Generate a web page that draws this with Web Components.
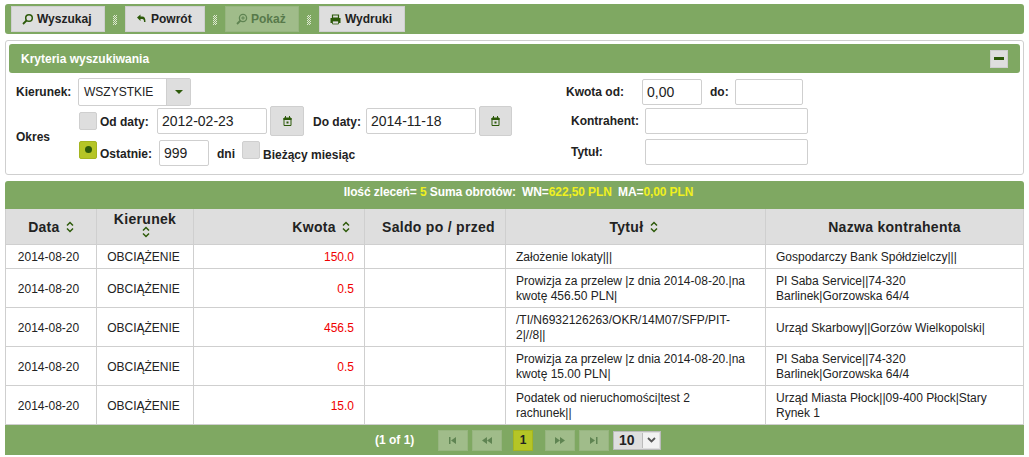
<!DOCTYPE html>
<html lang="pl">
<head>
<meta charset="utf-8">
<title>Kryteria wyszukiwania</title>
<style>
html, body { margin: 0; padding: 0; background: #fff; overflow: hidden; }
body { padding: 4px 5px 0 5px; font: 12px "Liberation Sans", Arial, sans-serif; color: #222; }
</style>
</head>
<body>
<app-toolbar>
  <tool-button icon="search" style="width:94px">Wyszukaj</tool-button>
  <tool-sep></tool-sep>
  <tool-button icon="back" style="width:80px">Powrót</tool-button>
  <tool-sep></tool-sep>
  <tool-button icon="zoom" disabled style="width:74px">Pokaż</tool-button>
  <tool-sep></tool-sep>
  <tool-button icon="print" style="width:86px">Wydruki</tool-button>
</app-toolbar>
<search-panel title="Kryteria wyszukiwania">
  <search-form></search-form>
</search-panel>
<data-grid></data-grid>

<script>
var ICONS = {
  search: '<circle cx="8" cy="5" r="3.3" fill="none" stroke="currentColor" stroke-width="1.5"/><path d="M5.500 7.500L2 11" stroke="currentColor" stroke-width="1.800"/>',
  zoom: '<circle cx="8" cy="5" r="3.600" fill="none" stroke="currentColor" stroke-width="1.300"/><path d="M5.500 7.500L2 11" stroke="currentColor" stroke-width="1.800"/><path d="M6.200 5h3.600M8 3.200v3.600" stroke="currentColor"/>',
  back: '<path d="M2 4.500L5.500 1.500v2h1.700c2.300 0 3.300 1.700 3.300 5.500H9c0-2.200-.4-3-1.800-3H5.500v2z" fill="currentColor"/>',
  print: '<path d="M3.500 2h6v3h-6z" fill="none" stroke="currentColor" stroke-width="1.200"/><path d="M1.500 5h10v5h-10z" fill="currentColor"/><path d="M3.500 8h6v3h-6z" fill="#dedede" stroke="currentColor" stroke-width=".8"/>'
};

// toolbar on top
class AppToolbar extends HTMLElement {
  constructor(){
    super();
    this.attachShadow({mode:"open"});
    this.shadowRoot.innerHTML = `<style>
      :host { display:flex; align-items:center; height:30px; box-sizing:border-box; padding:0 6px; background:#7fa862; border-radius:3px; }
    </style><slot></slot>`;
  }
}
customElements.define("app-toolbar", AppToolbar);

class ToolSep extends HTMLElement {
  constructor(){
    super();
    this.attachShadow({mode:"open"});
    this.shadowRoot.innerHTML = `<style>
      :host { display:block; width:4px; height:10px; margin:2px 8px 0 8px;
        background:repeating-conic-gradient(#dfe8d2 0 25%, transparent 0 50%) 0 0/2px 2px; }
    </style>`;
  }
}
customElements.define("tool-sep", ToolSep);

class ToolButton extends HTMLElement {
  constructor(){
    super();
    this.attachShadow({mode:"open"});
  }
  connectedCallback(){
    var icon = this.getAttribute("icon");
    this.shadowRoot.innerHTML = `<style>
      :host { display:flex; align-items:center; box-sizing:border-box; height:26px; padding:0 0 0 9px; gap:3px;
        background:#dedede; border:1px solid #cfcfcf; font:bold 12px "Liberation Sans",Arial,sans-serif; color:#222; }
      :host([disabled]) { background:#a0bc8a; border-color:#97b580; color:#57794a; }
      :host([disabled]) svg { color:#5f8452; }
      svg { width:13px; height:13px; color:#2d5a0a; flex:none; }
    </style><svg viewBox="0 0 13 13">${ICONS[icon]}</svg><slot></slot>`;
  }
}
customElements.define("tool-button", ToolButton);

// panel with the green header
class SearchPanel extends HTMLElement {
  constructor(){
    super();
    this.attachShadow({mode:"open"});
  }
  connectedCallback(){
    this.shadowRoot.innerHTML = `<style>
      :host { display:block; box-sizing:border-box; height:135px; margin-top:6px; padding:3px; border:1px solid #cfcfcf; border-radius:3px; background:#fff; }
      .head { display:flex; align-items:center; justify-content:space-between; height:29px; box-sizing:border-box; padding:0 12px;
        background:#7fa862; border-radius:3px; color:#fff; font:bold 12px "Liberation Sans",Arial,sans-serif; }
      .min { display:flex; align-items:center; justify-content:center; width:18px; height:18px; box-sizing:border-box;
        background:#dedede; border:1px solid #cfcfcf; }
      .min i { display:block; width:10px; height:3px; background:#2d5a0a; }
    </style>
    <div class="head"><span>${this.getAttribute("title")}</span><span class="min"><i></i></span></div>
    <slot></slot>`;
  }
}
customElements.define("search-panel", SearchPanel);

class TextField extends HTMLElement {
  constructor(){
    super();
    this.attachShadow({mode:"open"});
  }
  connectedCallback(){
    this.shadowRoot.innerHTML = `<style>
      :host { display:block; box-sizing:border-box; width:var(--w,100px); height:26px; padding:0 4px; background:#fff; flex:none;
        border:1px solid #cfcfcf; border-radius:2px; font:14px/24px "Liberation Sans",Arial,sans-serif; color:#222; }
    </style><slot></slot>`;
  }
}
customElements.define("text-field", TextField);

class CheckBox extends HTMLElement {
  constructor(){
    super();
    this.attachShadow({mode:"open"});
  }
  connectedCallback(){
    this.shadowRoot.innerHTML = `<style>
      :host { display:flex; align-items:center; justify-content:center; box-sizing:border-box; width:18px; height:18px; flex:none;
        background:#dedede; border:1px solid #cfcfcf; border-radius:2px; }
      :host([checked]) { background:#b5c526; border-color:#a5b520; }
      i { display:none; width:7px; height:7px; border-radius:50%; background:#2d5a0a; margin-top:-1px; }
      :host([checked]) i { display:block; }
    </style><i></i>`;
  }
}
customElements.define("check-box", CheckBox);

class CalButton extends HTMLElement {
  constructor(){
    super();
    this.attachShadow({mode:"open"});
    this.shadowRoot.innerHTML = `<style>
      :host { display:flex; align-items:center; justify-content:center; box-sizing:border-box; width:var(--w,34px); height:30px; flex:none;
        background:#dedede; border:1px solid #cfcfcf; border-radius:2px; }
      svg { width:9px; height:10px; }
    </style><svg viewBox="0 0 9 10"><path d="M1 2h7v7.500H1z" fill="none" stroke="#2d5a0a"/><path d="M.5 2h8v2h-8zM2 0h1v2H2zM6 0h1v2H6zM3.500 5.500h2v2h-2z" fill="#2d5a0a"/></svg>`;
  }
}
customElements.define("cal-button", CalButton);

class DropDown extends HTMLElement {
  constructor(){
    super();
    this.attachShadow({mode:"open"});
    this.shadowRoot.innerHTML = `<style>
      :host { display:flex; box-sizing:border-box; width:113px; height:28px; background:#fff; border:1px solid #cfcfcf; border-radius:2px;
        font:12px "Liberation Sans",Arial,sans-serif; color:#222; }
      .val { flex:1; padding:0 5px; line-height:27px; }
      .arr { width:23px; display:flex; align-items:center; justify-content:center; background:#dedede; border-left:1px solid #cfcfcf; }
      .arr i { width:0; height:0; border:4px solid transparent; border-top:4px solid #2d5a0a; border-bottom:0; }
    </style><span class="val"><slot></slot></span><span class="arr"><i></i></span>`;
  }
}
customElements.define("drop-down", DropDown);

// the search criteria
class SearchForm extends HTMLElement {
  constructor(){
    super();
    this.attachShadow({mode:"open"});
    this.shadowRoot.innerHTML = `<style>
      :host { display:flex; padding:5px 0 0 7px; font:bold 12px "Liberation Sans",Arial,sans-serif; color:#222; }
      .left { width:550px; display:grid; grid-template-columns:62px 1fr; grid-template-rows:28px 61px; align-items:center; }
      .line { display:flex; align-items:center; }
      .stack { display:flex; flex-direction:column; gap:2px; align-self:start; }
      .stack .line { height:30px; }
      .right { display:flex; flex-direction:column; padding-top:1px; }
      .right .line { height:26px; margin-bottom:3px; }
      .right .line + .line + .line { margin-top:2px; }
      .up { margin-bottom:6px; }
    </style>
    <div class="left">
      <span>Kierunek:</span>
      <div class="line"><drop-down>WSZYSTKIE</drop-down></div>
      <span>Okres</span>
      <div class="stack">
        <div class="line">
          <check-box style="margin:0 3px 0 1px"></check-box>
          <span style="width:57px;padding-top:2px">Od daty:</span>
          <text-field style="--w:110px">2012-02-23</text-field>
          <cal-button style="margin-left:3px"></cal-button>
          <span style="width:53px;margin-left:9px;padding-top:2px">Do daty:</span>
          <text-field style="--w:110px">2014-11-18</text-field>
          <cal-button style="margin-left:3px;--w:33px"></cal-button>
        </div>
        <div class="line">
          <check-box checked class="up" style="margin-left:1px;margin-right:3px"></check-box>
          <span style="width:59px;padding-top:2px">Ostatnie:</span>
          <text-field style="--w:50px">999</text-field>
          <span style="margin:2px 8px 0 8px;width:17px">dni</span>
          <check-box class="up" style="margin-right:3px"></check-box>
          <span style="padding-top:3px">Bieżący miesiąc</span>
        </div>
      </div>
    </div>
    <div class="right">
      <div class="line">
        <span style="width:76px">Kwota od:</span>
        <text-field style="--w:60px">0,00</text-field>
        <span style="margin:0 8px;width:17px">do:</span>
        <text-field style="--w:68px"></text-field>
      </div>
      <div class="line">
        <span style="width:74px;margin-left:5px">Kontrahent:</span>
        <text-field style="--w:163px"></text-field>
      </div>
      <div class="line">
        <span style="width:74px;margin-left:5px">Tytuł:</span>
        <text-field style="--w:163px"></text-field>
      </div>
    </div>`;
  }
}
customElements.define("search-form", SearchForm);

class SortMark extends HTMLElement {
  constructor(){
    super();
    this.attachShadow({mode:"open"});
    this.shadowRoot.innerHTML = `<style>
      :host { display:inline-block; width:8px; height:12px; vertical-align:-1px; margin-left:2px; }
      svg { display:block; }
    </style><svg width="8" height="12" viewBox="0 0 8 12"><path d="M1 4.500L4 1.500L7 4.500M1 7.500L4 10.500L7 7.500" fill="none" stroke="#2d5a0a" stroke-width="1.500"/></svg>`;
  }
}
customElements.define("sort-mark", SortMark);

class PagerButton extends HTMLElement {
  constructor(){
    super();
    this.attachShadow({mode:"open"});
  }
  connectedCallback(){
    var paths = {
      first: "M2 1h1.500v7H2zM9 1v7L4 4.500z",
      prev: "M6 1v7L1 4.500zM11 1v7L6 4.500z",
      next: "M1 1v7l5-3.500zM6 1v7l5-3.500z",
      last: "M2 1v7l5-3.500zM8 1h1.500v7H8z"
    };
    this.shadowRoot.innerHTML = `<style>
      :host { display:flex; align-items:center; justify-content:center; box-sizing:border-box; width:30px; height:21px;
        background:#a0bc8a; border:1px solid #97b580; }
      svg { width:12px; height:9px; }
    </style><svg viewBox="0 0 12 9"><path d="${paths[this.getAttribute("kind")]}" fill="#5f8452"/></svg>`;
  }
}
customElements.define("pager-button", PagerButton);

class PagerBar extends HTMLElement {
  constructor(){
    super();
    this.attachShadow({mode:"open"});
    this.shadowRoot.innerHTML = `<style>
      :host { display:flex; align-items:center; height:30px; box-sizing:border-box; padding:0 0 0 370px; background:#7fa862;
        font:bold 12px "Liberation Sans",Arial,sans-serif; color:#fff; }
      .cur { display:flex; align-items:center; justify-content:center; box-sizing:border-box; width:20px; height:21px; margin:0 12px 0 11px;
        background:#b5c526; border:1px solid #a5b520; color:#222; }
      .pp { display:flex; box-sizing:border-box; width:48px; height:19px; margin-left:4px; background:#dedede; border:1px solid #bbb; color:#222; font-size:14px; line-height:17px; }
      .pp span { flex:1; padding-left:5px; }
      .pp i { width:16px; margin:1px; display:flex; align-items:center; justify-content:center; background:#f2f2f2; border-left:1px solid #bbb; }
      .info { width:63px; }
      pager-button + pager-button { margin-left:4px; }
    </style>
    <span class="info">(1 of 1)</span>
    <pager-button kind="first"></pager-button>
    <pager-button kind="prev"></pager-button>
    <span class="cur">1</span>
    <pager-button kind="next"></pager-button>
    <pager-button kind="last"></pager-button>
    <span class="pp"><span>10</span><i><svg width="9" height="6" viewBox="0 0 9 6"><path d="M1 1l3.500 3.500L8 1" fill="none" stroke="#555" stroke-width="1.800"/></svg></i></span>`;
  }
}
customElements.define("pager-bar", PagerBar);

var PRZELEW = "Prowizja za przelew |z dnia 2014-08-20.|na kwotę ";
var SABA = "PI Saba Service||74-320 Barlinek|Gorzowska 64/4";
var ROWS = [
  ["150.0", "Założenie lokaty|||", "Gospodarczy Bank Spółdzielczy|||", 24],
  ["0.5", PRZELEW + "456.50 PLN|", SABA, 39],
  ["456.5", "/TI/N6932126263/OKR/14M07/SFP/PIT-2|//8||", "Urząd Skarbowy||Gorzów Wielkopolski|", 39],
  ["0.5", PRZELEW + "15.00 PLN|", SABA, 39],
  ["15.0", "Podatek od nieruchomości|test 2 rachunek||", "Urząd Miasta Płock||09-400 Płock|Stary Rynek 1", 39]
];

// results table with summary and pager
class DataGrid extends HTMLElement {
  constructor(){
    super();
    this.attachShadow({mode:"open"});
    var rows = ROWS.map(function(r){
      return `<tr style="height:${r[3]}px"><td class="c d">2014-08-20</td><td class="c k">OBCIĄŻENIE</td><td class="amt">${r[0]}</td><td></td><td class="t">${r[1]}</td><td>${r[2]}</td></tr>`;
    }).join("");
    this.shadowRoot.innerHTML = `<style>
      :host { display:block; margin-top:6px; font:12px "Liberation Sans",Arial,sans-serif; color:#222; }
      .sum { height:28px; box-sizing:border-box; padding:4px 0 0 8px; text-align:center; background:#7fa862; border-radius:3px 3px 0 0;
        color:#fff; font-weight:bold; line-height:14px; letter-spacing:-.1px; }
      .sum b { color:#f0f020; }
      .sum span { margin-left:3px; }
      table { width:100%; border-collapse:collapse; table-layout:fixed; }
      th { height:33px; padding:0; background:#dedede; border:1px solid #cfcfcf; border-top:0; font:bold 14px "Liberation Sans",Arial,sans-serif; letter-spacing:.3px; color:#222; }
      th.k { line-height:13px; padding-bottom:2px; }
      th.r { text-align:right; padding-right:14px; }
      th.s { padding-left:7px; }
      th.t { padding-right:4px; }
      td { padding:2px 10px 0 10px; border:1px solid #cfcfcf; line-height:15px; }
      td.c { text-align:center; padding:2px 0 0 0; }
      td.d { padding-right:5px; }
      td.k { padding-right:3px; }
      td.t { padding-right:19px; }
      td.amt { text-align:right; color:#f00000; }
    </style>
    <div class="sum">Ilość zleceń= <b>5</b> Suma obrotów: <span>WN=<b>622,50 PLN</b></span> <span>MA=<b>0,00 PLN</b></span></div>
    <table>
      <colgroup><col style="width:91px"><col style="width:97px"><col style="width:171px"><col style="width:141px"><col style="width:260px"><col></colgroup>
      <thead><tr>
        <th>Data <sort-mark></sort-mark></th>
        <th class="k">Kierunek<br><sort-mark></sort-mark></th>
        <th class="r">Kwota <sort-mark></sort-mark></th>
        <th class="s">Saldo po / przed</th>
        <th class="t">Tytuł <sort-mark></sort-mark></th>
        <th>Nazwa kontrahenta</th>
      </tr></thead>
      <tbody>${rows}</tbody>
    </table>
    <pager-bar></pager-bar>`;
  }
}
customElements.define("data-grid", DataGrid);
</script>
</body>
</html>
